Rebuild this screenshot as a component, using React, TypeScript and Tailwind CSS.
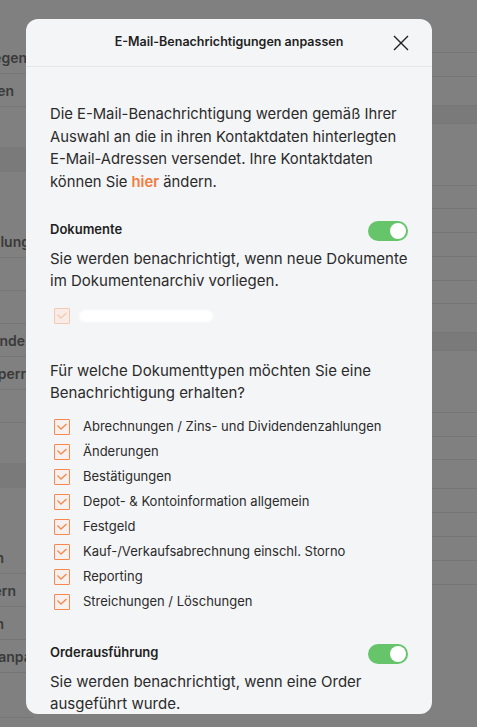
import React from "react";

const FONT = { fontFamily: "Inter, 'Noto Sans', sans-serif" };

type Row = { h: number; text?: string; pad?: string; band?: boolean; noLine?: boolean; shift?: boolean };

const leftRows: Row[] = [
  { h: 41, noLine: true },
  { h: 33, text: "Hinterlegen", pad: "pr-[7px]" },
  { h: 33, text: "Unterlagen", pad: "pr-[20px]" },
  { h: 40, noLine: true },
  { h: 25, band: true, noLine: true },
  { h: 53, noLine: true },
  { h: 33, text: "Darstellung", pad: "pr-[4px]" },
  { h: 33 },
  { h: 33 },
  { h: 33, text: "Kunde", pad: "pr-[9px]" },
  { h: 33, text: "Kontosperre", pad: "pr-0" },
  { h: 33 },
  { h: 40, noLine: true },
  { h: 25, band: true, noLine: true },
  { h: 53, noLine: true },
  { h: 33, text: "Aktion", pad: "pr-[30px]" },
  { h: 33, text: "Ändern", pad: "pr-[18px]" },
  { h: 33, text: "Löschen", pad: "pr-[30px]" },
  { h: 33, text: "Benachrichtigungen anpassen", pad: "pr-0", shift: true },
  { h: 45 },
];

const rightRows: Row[] = [
  { h: 53 },
  { h: 24 },
  { h: 29 },
  { h: 18, band: true },
  { h: 62 },
  { h: 23 },
  { h: 24 },
  { h: 24 },
  { h: 24 },
  { h: 23 },
  { h: 29 },
  { h: 18, band: true },
  { h: 62 },
  { h: 24 },
  { h: 23 },
  { h: 29 },
  { h: 24 },
  { h: 24 },
  { h: 24 },
  { h: 24 },
];

function Toggle() {
  return (
    <div className="flex h-[20px] w-[40px] shrink-0 items-center justify-end rounded-full bg-[#66c46a] pr-[2px]">
      <div className="h-[16px] w-[16px] rounded-full bg-white" />
    </div>
  );
}

function Check({ disabled }: { disabled?: boolean }) {
  const c = disabled ? "#f6c8ad" : "#f5874f";
  return (
    <div
      className={
        "flex h-[16px] w-[16px] shrink-0 items-center justify-center rounded-[1px] border-[1.5px] " +
        (disabled ? "border-[#f6c8ad] bg-[#f7ece7]" : "border-[#f5874f] bg-[#f6f1ee]")
      }
    >
      <svg width="12" height="12" viewBox="0 0 12 12" fill="none">
        <path d="M1.5 4.5 L5 8 L10.5 3" stroke={c} strokeWidth="1.3" />
      </svg>
    </div>
  );
}

const docTypes = [
  "Abrechnungen / Zins- und Dividendenzahlungen",
  "Änderungen",
  "Bestätigungen",
  "Depot- & Kontoinformation allgemein",
  "Festgeld",
  "Kauf-/Verkaufsabrechnung einschl. Storno",
  "Reporting",
  "Streichungen / Löschungen",
];

export default function App() {
  return (
    <div className="relative h-[727px] w-[477px] overflow-hidden bg-[#808080]" style={FONT}>
      {/* background page (dimmed) */}
      <div className="flex h-full w-full">
        <div className="flex w-[34px] flex-col overflow-hidden">
          {leftRows.map((r, i) => (
            <div
              key={i}
              style={{ height: r.h }}
              className={
                "flex shrink-0 items-center justify-end " +
                (r.pad ? r.pad + " " : "") +
                (r.noLine ? "" : "border-b border-[#767676] ") +
                (r.band ? "bg-[#7a7a7a]" : "")
              }
            >
              {r.text && (
                <span
                  className={
                    "whitespace-nowrap text-[14px] font-semibold text-[#3a3a3a] " + (r.shift ? "-mr-[30px]" : "")
                  }
                >
                  {r.text}
                </span>
              )}
            </div>
          ))}
        </div>
        <div className="flex-1" />
        <div className="flex w-[45px] flex-col">
          {rightRows.map((r, i) => (
            <div
              key={i}
              style={{ height: r.h }}
              className={"shrink-0 border-b border-[#767676] " + (r.band ? "bg-[#7a7a7a]" : "")}
            />
          ))}
        </div>
      </div>

      {/* modal */}
      <div className="absolute left-[26px] top-[19px] flex h-[695px] w-[406px] flex-col overflow-hidden rounded-[12px] bg-[#f4f5f7] text-[#2b2b2b]">
        <div className="relative flex h-[48px] shrink-0 items-center justify-center border-b border-[#e3e5e9]">
          <span className="text-[12.5px] font-semibold text-[#1f1f1f]">E-Mail-Benachrichtigungen anpassen</span>
          <svg
            className="absolute right-[23px] top-[16px]"
            width="16"
            height="16"
            viewBox="0 0 16 16"
            fill="none"
          >
            <path d="M1 1 L15 15 M15 1 L1 15" stroke="#1f1f1f" strokeWidth="1.4" />
          </svg>
        </div>

        <div className="flex flex-col px-6">
          <p className="mt-[36px] text-[14.8px] leading-[22.5px]">
            Die E-Mail-Benachrichtigung werden gemäß Ihrer Auswahl an die in ihren Kontaktdaten hinterlegten
            E-Mail-Adressen versendet. Ihre Kontaktdaten können Sie{" "}
            <span className="font-semibold text-[#f47b3e]">hier</span> ändern.
          </p>

          <div className="mt-[28px] flex items-center justify-between">
            <span className="-mt-[3px] text-[13px] font-semibold text-[#1f1f1f]">Dokumente</span>
            <Toggle />
          </div>
          <p className="mt-[7px] text-[15px] leading-[22px]">
            Sie werden benachrichtigt, wenn neue Dokumente im Dokumentenarchiv vorliegen.
          </p>

          <div className="mt-[16px] flex items-center gap-[9px] pl-[4px]">
            <Check disabled />
            <div className="h-[12px] w-[134px] rounded-full bg-white blur-[1px]" />
          </div>

          <p className="mt-[36px] text-[15px] leading-[22px]">
            Für welche Dokumenttypen möchten Sie eine Benachrichtigung erhalten?
          </p>

          <div className="mt-[10px] flex flex-col pl-[4px]">
            {docTypes.map((t) => (
              <div key={t} className="flex h-[25px] items-center gap-[13px]">
                <Check />
                <span className="text-[13px]">{t}</span>
              </div>
            ))}
          </div>

          <div className="mt-[30px] flex items-center justify-between">
            <span className="-mt-[3px] text-[13px] font-semibold text-[#1f1f1f]">Orderausführung</span>
            <Toggle />
          </div>
          <p className="mt-[7px] text-[15px] leading-[22px]">
            Sie werden benachrichtigt, wenn eine Order ausgeführt wurde.
          </p>
        </div>
      </div>
    </div>
  );
}
